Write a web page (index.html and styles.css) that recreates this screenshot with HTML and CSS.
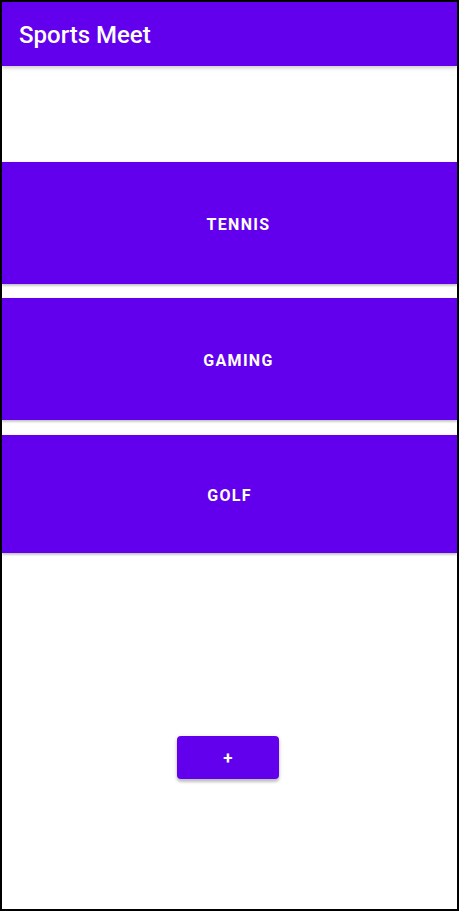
FILE: index.html
```html
<!DOCTYPE html>
<html>
<head>
<meta charset="utf-8">
<link rel="stylesheet" href="styles.css">
</head>
<body>
<div class="frame">
  <header class="appbar"><h1 class="title">Sports Meet</h1></header>
  <main class="content">
    <div class="list">
      <button class="card">TENNIS</button>
      <button class="card">GAMING</button>
      <button class="card card-last">GOLF</button>
    </div>
    <div class="add-wrap">
      <button class="add">+</button>
    </div>
  </main>
</div>
</body>
</html>
```
FILE: styles.css
```css
* { box-sizing: border-box; }
html, body { margin: 0; padding: 0; background: #fff; }
body { font-family: Roboto, "Noto Sans", sans-serif; }
.frame {
  width: 459px;
  height: 911px;
  border: 2px solid #000;
  display: flex;
  flex-direction: column;
  overflow: hidden;
}
.appbar {
  height: 64px;
  background: #6200ee;
  display: flex;
  align-items: center;
  padding-left: 17px;
  box-shadow: 0 2px 4px rgba(0,0,0,0.2);
  position: relative;
  z-index: 1;
}
.title {
  margin: 0;
  color: #fff;
  font-size: 24px;
  font-weight: 500;
  padding-top: 1px;
}
.content {
  flex: 1;
  display: flex;
  flex-direction: column;
}
.list {
  margin-top: 96px;
  display: flex;
  flex-direction: column;
  gap: 14px;
}
.card {
  height: 122px;
  border: none;
  margin: 0;
  width: 100%;
  padding: 3px 0 0 18px;
  background: #6200ee;
  color: #fff;
  font-family: Roboto, sans-serif;
  font-size: 16px;
  font-weight: 700;
  letter-spacing: 1.3px;
  box-shadow: 0 2px 2px rgba(0,0,0,0.2), 0 0 2px rgba(0,0,0,0.1);
}
.card-last { height: 118px; margin-top: 1px; padding-left: 0; }
.add-wrap {
  margin-top: 183px;
  display: flex;
  justify-content: center;
  padding-right: 3px;
}
.add {
  width: 102px;
  height: 43px;
  border: none;
  border-radius: 4px;
  background: #6200ee;
  color: #fff;
  font-family: Roboto, sans-serif;
  font-size: 17px;
  font-weight: 700;
  box-shadow: 0 3px 3px rgba(0,0,0,0.2), 0 1px 5px rgba(0,0,0,0.12);
}
```
